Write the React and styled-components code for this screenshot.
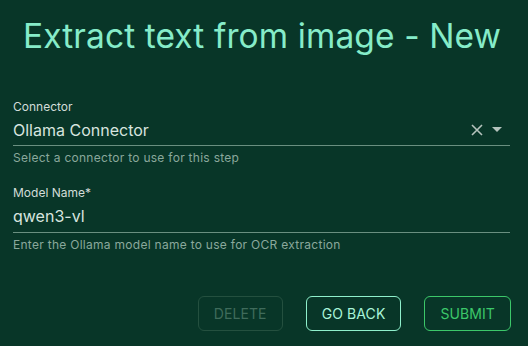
import React from "react";
import styled, { createGlobalStyle } from "styled-components";

const Global = createGlobalStyle`
  html, body { margin: 0; padding: 0; background: #083628; }
  body { font-family: "Inter", "Noto Sans", sans-serif; }
`;

const Page = styled.div`
  width: 528px;
  height: 346px;
  box-sizing: border-box;
  padding: 13px 18px 0 13px;
  background: #083628;
  display: flex;
  flex-direction: column;
`;

const Title = styled.h1`
  margin: 0 0 0 1px;
  text-align: center;
  font-weight: 400;
  font-size: 33.5px;
  line-height: 46px;
  color: #86ecc9;
  letter-spacing: 0.1px;
`;

const Form = styled.div`
  margin-top: 40px;
  display: flex;
  flex-direction: column;
  gap: 19px;
`;

const Field = styled.div`
  display: flex;
  flex-direction: column;
`;

const Label = styled.label`
  font-size: 12px;
  line-height: 16px;
  color: #d2ddd8;
`;

const InputRow = styled.div`
  display: flex;
  align-items: center;
  height: 24px;
  margin-top: 3px;
  border-bottom: 1px solid #6a8f80;
  padding-bottom: ${(p) => p.$pad}px;
`;

const Value = styled.div`
  flex: 1;
  font-size: 16px;
  color: #d7e4df;
`;

const Helper = styled.div`
  margin-top: 4px;
  font-size: 12px;
  line-height: 16px;
  letter-spacing: 0.28px;
  color: #8aa89c;
`;

const Adornments = styled.div`
  display: flex;
  align-items: center;
  gap: 8px;
  margin-right: 8px;
`;

const Actions = styled.div`
  margin-top: auto;
  margin-bottom: 15px;
  margin-right: -1px;
  display: flex;
  justify-content: flex-end;
  gap: 23px;
`;

const Button = styled.button`
  height: 35px;
  padding: 0 15px;
  min-width: 85px;
  border-radius: 6px;
  background: transparent;
  font-family: "Inter", "Noto Sans", sans-serif;
  font-size: 14px;
  letter-spacing: 0.1px;
  border: 1px solid ${(p) => p.$border};
  color: ${(p) => p.$color};
`;

export default function App() {
  return (
    <>
      <Global />
      <Page>
        <Title>Extract text from image - New</Title>
        <Form>
          <Field>
            <Label>Connector</Label>
            <InputRow $pad={3}>
              <Value>Ollama Connector</Value>
              <Adornments>
                <svg width="14" height="14" viewBox="0 0 14 14">
                  <path d="M2 2 L12 12 M12 2 L2 12" stroke="#b5c3bd" strokeWidth="1.6" />
                </svg>
                <svg width="10" height="6" viewBox="0 0 10 6">
                  <path d="M0 0 H10 L5 5 Z" fill="#b5c3bd" />
                </svg>
              </Adornments>
            </InputRow>
            <Helper>Select a connector to use for this step</Helper>
          </Field>
          <Field>
            <Label>Model Name*</Label>
            <InputRow $pad={4}>
              <Value>qwen3-vl</Value>
            </InputRow>
            <Helper>Enter the Ollama model name to use for OCR extraction</Helper>
          </Field>
        </Form>
        <Actions>
          <Button $border="#24503f" $color="#3f6b5b">DELETE</Button>
          <Button $border="#8ff0cc" $color="#a8f5d8">GO BACK</Button>
          <Button $border="#3cc86a" $color="#3cc86a">SUBMIT</Button>
        </Actions>
      </Page>
    </>
  );
}
